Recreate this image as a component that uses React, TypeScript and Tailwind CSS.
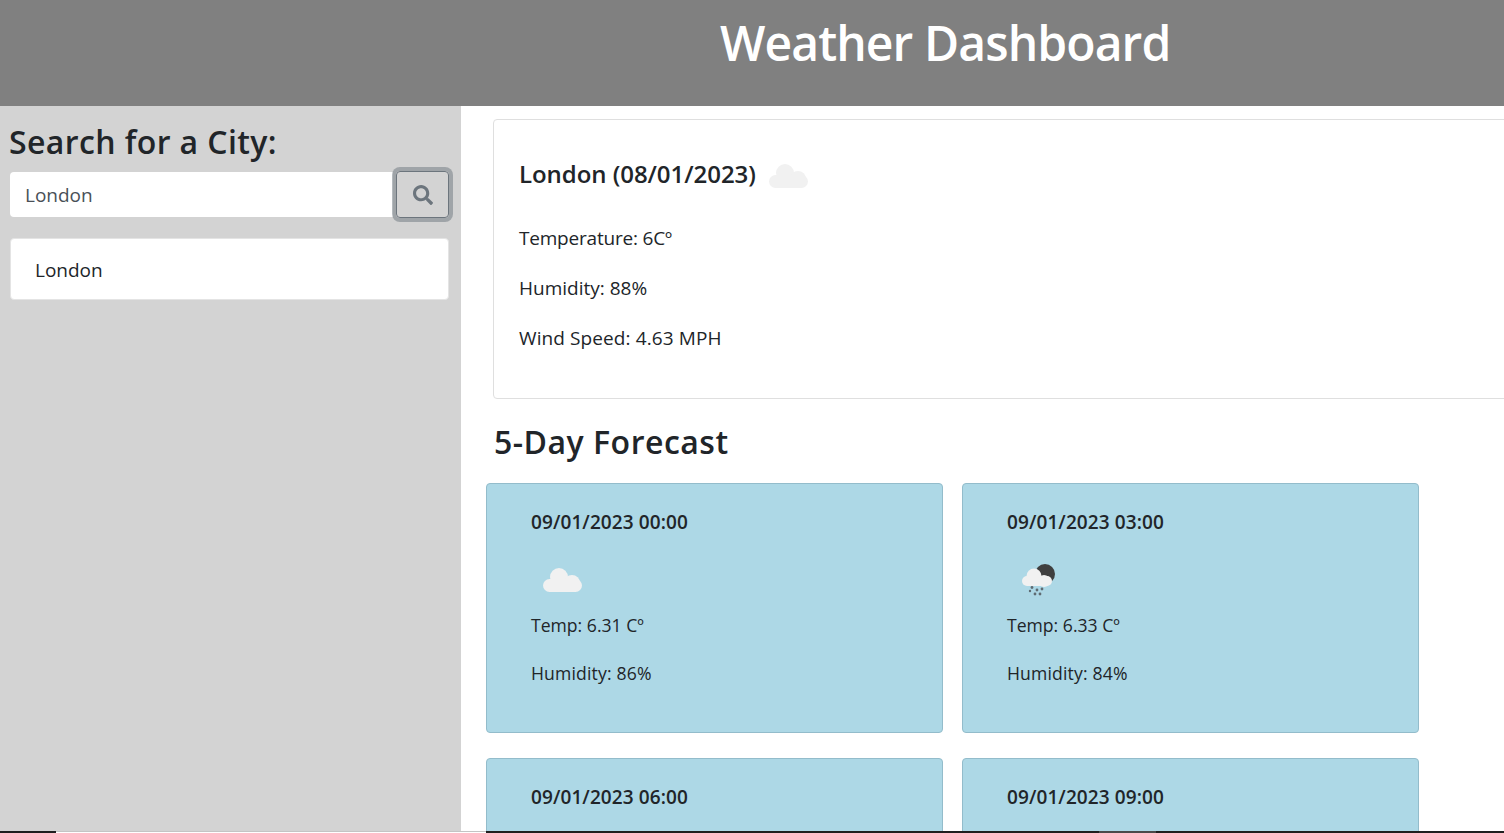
import React from 'react';
import { FaSearch } from 'react-icons/fa';

const forecast = [
  { date: '09/01/2023 00:00', icon: 'cloud', temp: '6.31', humidity: '86' },
  { date: '09/01/2023 03:00', icon: 'rain', temp: '6.33', humidity: '84' },
  { date: '09/01/2023 06:00', icon: 'cloud', temp: '6.2', humidity: '84' },
  { date: '09/01/2023 09:00', icon: 'cloud', temp: '6.4', humidity: '83' },
];

function Cloud() {
  return (
    <svg width="39" height="24" viewBox="0 0 39 24" className="block">
      <g fill="#f1f1f1">
        <circle cx="16" cy="9" r="9" />
        <circle cx="29" cy="15" r="8" />
        <rect x="0" y="11" width="39" height="13" rx="6.5" />
      </g>
    </svg>
  );
}

function RainMoon() {
  return (
    <svg width="36" height="34" viewBox="0 0 36 34" className="block ml-[2px]">
      <circle cx="24" cy="11" r="10" fill="#3f3f3f" />
      <g fill="#f1f1f1">
        <circle cx="13" cy="13" r="7.5" />
        <circle cx="23" cy="18" r="6" />
        <rect x="1" y="13" width="30" height="10" rx="5" />
      </g>
      <g fill="#5f6b72">
        <circle cx="11" cy="24.5" r="1.4" />
        <circle cx="16" cy="27" r="1.4" />
        <circle cx="21" cy="26" r="1.4" />
        <circle cx="9" cy="28" r="1.2" />
        <circle cx="14" cy="31" r="1.4" />
        <circle cx="19" cy="31" r="1.4" />
      </g>
    </svg>
  );
}

export default function App() {
  return (
    <div className="h-[833px] flex flex-col overflow-hidden bg-white text-[#212529] font-['Open_Sans',sans-serif]">
      {/* Header */}
      <header className="h-[106px] shrink-0 bg-[#808080] pl-[720px] pt-[14px]">
        <h1 className="text-[48px] leading-[58px] font-semibold text-white tracking-[-0.9px]">Weather Dashboard</h1>
      </header>

      <div className="flex-1 min-h-0 flex">
        {/* Sidebar */}
        <aside className="w-[461px] shrink-0 bg-[#d3d3d3] pl-[9px] pr-[12px] pt-[16px]">
          <h2 className="text-[32px] leading-[40px] font-semibold tracking-[0.4px]">Search for a City:</h2>
          <div className="mt-[9px] ml-px flex items-center">
            <div className="w-[383px] h-[45px] bg-white rounded-l-[4px] pl-[15px] pt-[2px] flex items-center text-[#495057] text-[19px]">London</div>
            <button className="ml-[3px] w-[53px] h-[47px] flex items-center justify-center rounded-[4px] border border-[#6c757d] text-[#6c757d] shadow-[0_0_0_4px_rgba(108,117,125,0.5)]">
              <FaSearch size={20} />
            </button>
          </div>
          <div className="mt-[20px] ml-px w-[439px] h-[62px] bg-white border border-[#e4e4e4] rounded-[4px] pl-[24px] pt-[2px] flex items-center text-[19px]">London</div>
        </aside>

        {/* Main */}
        <main className="flex-1 min-w-0 overflow-hidden">
          <section className="ml-[32px] mt-[13px] w-[1100px] h-[280px] border border-[#dfdfdf] rounded-[4px] pl-[25px] pt-[36px]">
            <div className="flex items-center h-[36px]">
              <h3 className="text-[24px] font-semibold tracking-[-0.05px]">London (08/01/2023)</h3>
              <div className="ml-[13px] mt-[4px]"><Cloud /></div>
            </div>
            <p className="mt-[33px] text-[19px] leading-[26px] tracking-[-0.2px]">Temperature: 6Cº</p>
            <p className="mt-[24px] text-[19px] leading-[26px]">Humidity: 88%</p>
            <p className="mt-[24px] text-[19px] leading-[26px] tracking-[0.1px]">Wind Speed: 4.63 MPH</p>
          </section>

          <h2 className="ml-[33px] mt-[21px] text-[32px] leading-[44px] font-semibold tracking-[0.5px]">5-Day Forecast</h2>

          <div className="ml-[25px] mt-[19px] grid grid-cols-[457px_457px] gap-x-[19px] gap-y-[25px]">
            {forecast.map((day) => (
              <div key={day.date} className="h-[250px] bg-[#add8e6] border border-[#93bccb] rounded-[4px] pl-[44px] pt-[25px]">
                <h5 className="text-[19px] leading-[26px] font-semibold tracking-[0.1px]">{day.date}</h5>
                <div className="mt-[26px] ml-[12px] h-[37px] flex items-center">
                  {day.icon === 'cloud' ? <Cloud /> : <RainMoon />}
                </div>
                <p className="mt-[15px] text-[17.6px] leading-[24px]">Temp: {day.temp} Cº</p>
                <p className="mt-[24px] text-[17.6px] leading-[24px] tracking-[0.15px]">Humidity: {day.humidity}%</p>
              </div>
            ))}
          </div>
        </main>
      </div>

      {/* Window edge at the bottom */}
      <div className="h-[2px] shrink-0 flex bg-[#1f1f1f]">
        <div className="w-[56px]" />
        <div className="w-[430px] bg-white border-t border-[#c4c4c4]" />
        <div className="w-[613px]" />
        <div className="w-[57px] bg-[#4a4a4a]" />
      </div>
    </div>
  );
}
